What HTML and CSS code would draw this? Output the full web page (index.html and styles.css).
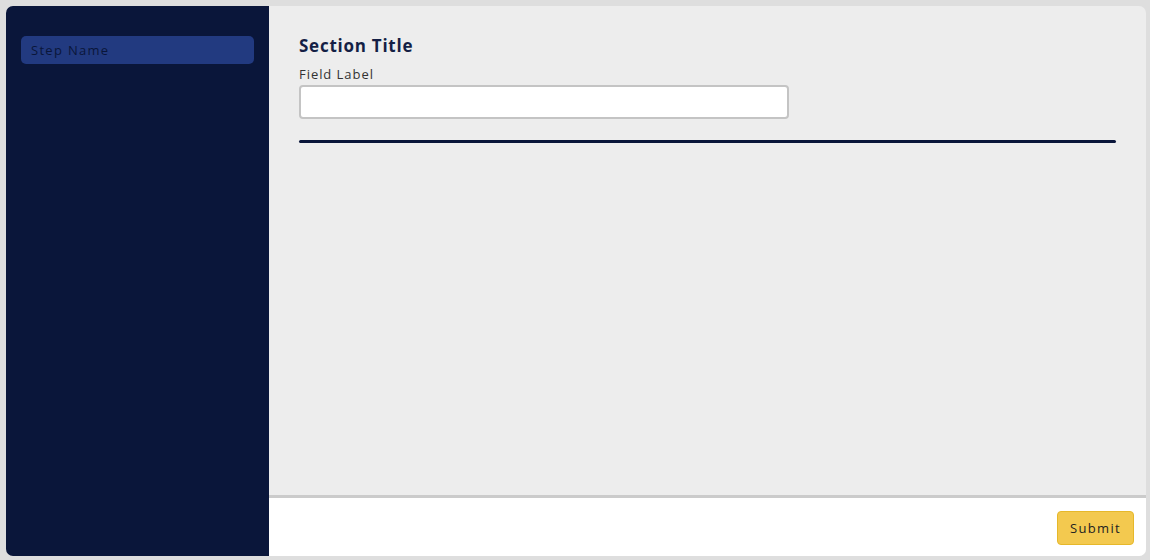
FILE: index.html
```html
<!DOCTYPE html>
<html>
<head>
<meta charset="utf-8">
<link rel="stylesheet" href="styles.css">
</head>
<body>
<div class="app">
  <aside class="sidebar">
    <div class="step active">Step Name</div>
  </aside>
  <div class="main">
    <div class="content">
      <h2 class="section-title">Section Title</h2>
      <label class="field-label">Field Label</label>
      <input class="field-input" type="text">
      <div class="divider"></div>
    </div>
    <div class="footer">
      <button class="submit">Submit</button>
    </div>
  </div>
</div>
</body>
</html>
```
FILE: styles.css
```css
html, body { margin: 0; padding: 0; }
body {
  background: #dedede;
  font-family: "Open Sans", "Liberation Sans", sans-serif;
  padding: 6px 4px 4px 6px;
  box-sizing: border-box;
  height: 560px;
}
.app {
  display: flex;
  height: 550px;
  border-radius: 7px;
  overflow: hidden;
}
.sidebar {
  width: 263px;
  flex: none;
  background: #0a163a;
  padding: 30px 15px 0 15px;
  box-sizing: border-box;
}
.step {
  height: 28px;
  border-radius: 5px;
  background: #223a80;
  color: #0a163a;
  font-size: 13px;
  letter-spacing: 1.3px;
  padding: 0 10px;
  line-height: 28px;
}
.main {
  flex: 1;
  display: flex;
  flex-direction: column;
  background: #ededed;
}
.content {
  flex: 1;
  padding: 29px 30px 0 30px;
  display: flex;
  flex-direction: column;
  align-items: flex-start;
}
.section-title {
  margin: 0;
  font-size: 17px;
  font-weight: 700;
  color: #141f45;
  letter-spacing: 0.75px;
  line-height: 22px;
}
.field-label {
  margin-top: 9px;
  font-size: 13px;
  color: #333;
  letter-spacing: 0.95px;
  line-height: 16px;
}
.field-input {
  margin: 3px 0 0 0;
  width: 490px;
  height: 34px;
  box-sizing: border-box;
  border: 2px solid #c4c4c4;
  border-radius: 4px;
  background: #fff;
  outline: none;
}
.divider {
  margin-top: 21px;
  align-self: stretch;
  height: 3px;
  border-radius: 2px;
  background: #0a163a;
}
.footer {
  height: 61px;
  box-sizing: border-box;
  border-top: 3px solid #cbcbcb;
  background: #fff;
  display: flex;
  justify-content: flex-end;
  align-items: center;
  padding: 1px 12px 0 0;
}
.submit {
  width: 77px;
  height: 34px;
  background: #f3c94f;
  border: 1px solid #e6b82a;
  border-radius: 4px;
  color: #222;
  font-family: "Open Sans", "Liberation Sans", sans-serif;
  font-size: 13px;
  letter-spacing: 1.3px;
  padding: 0;
}
```
